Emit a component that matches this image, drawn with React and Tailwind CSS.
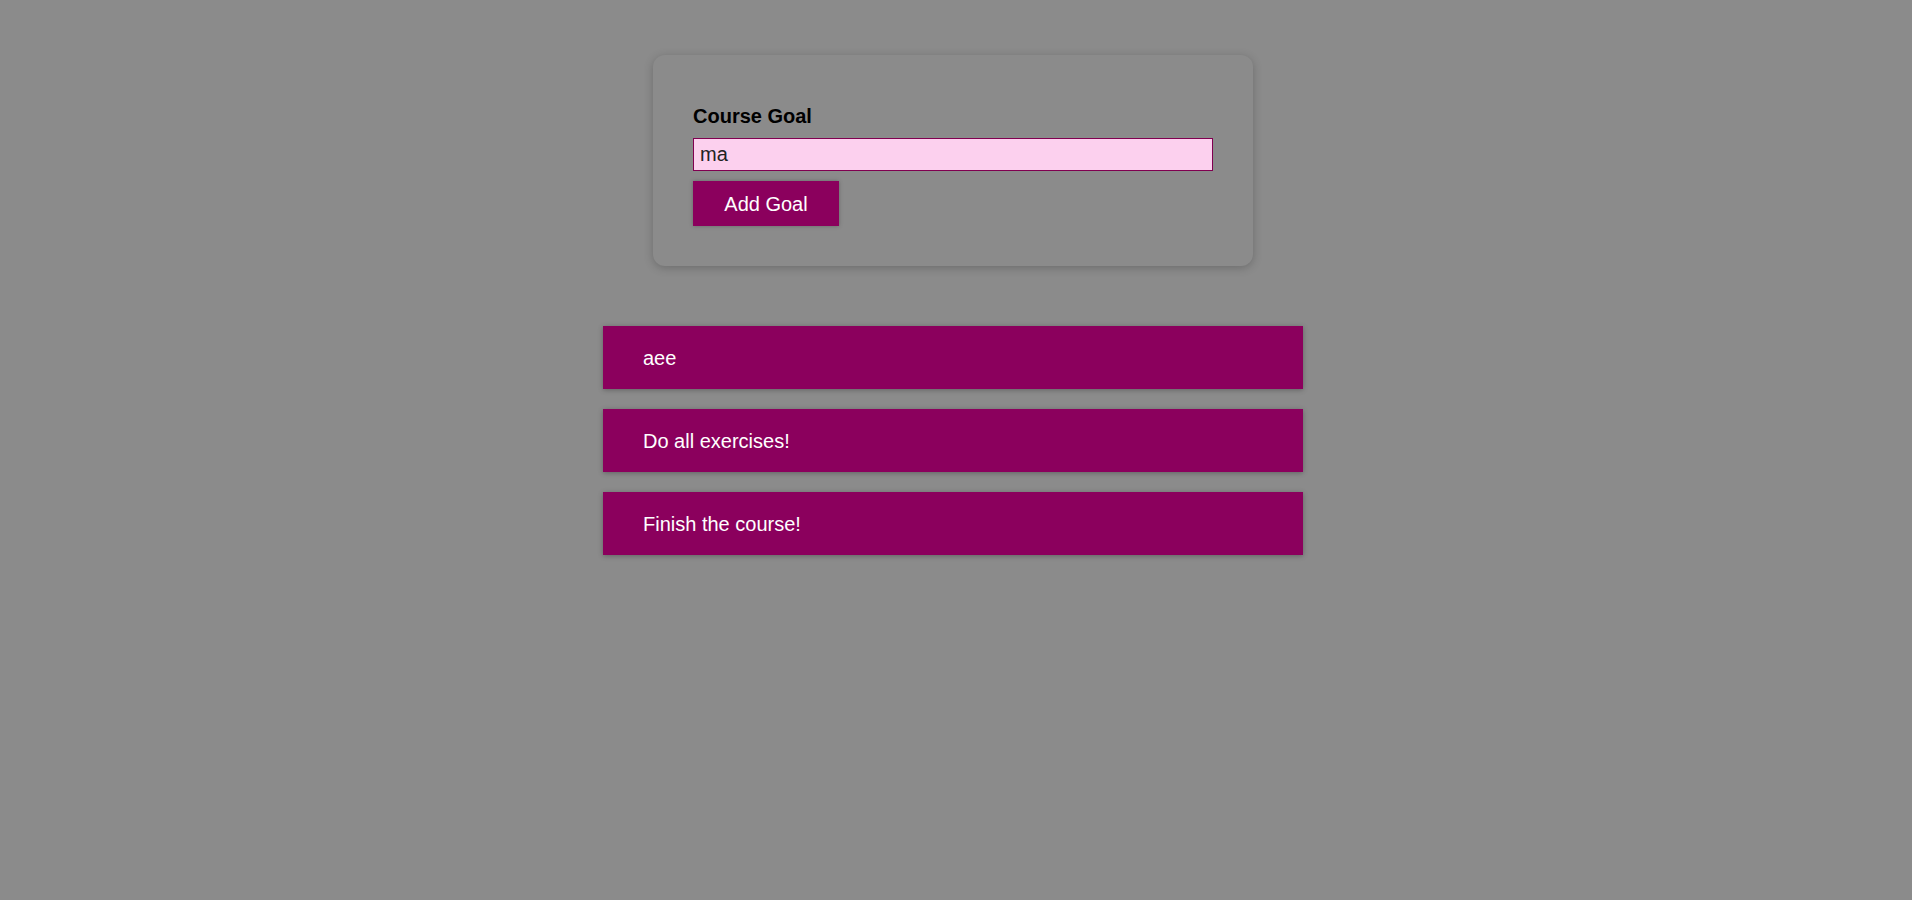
import { useState } from "react";

const initialGoals = [
    { id: "g3", text: "aee" },
    { id: "g1", text: "Do all exercises!" },
    { id: "g2", text: "Finish the course!" },
];

function CourseInput() {
    const [value, setValue] = useState("ma");

    return (
        <form
            onSubmit={(e) => e.preventDefault()}
            className="w-[600px] mx-auto rounded-[12px] bg-[#8b8b8b] px-[40px] pt-[50px] pb-[40px] shadow-[0_2px_10px_rgba(0,0,0,0.22)]"
        >
            <label className="block mb-[10px] text-[20px] leading-[23px] font-bold text-black">
                Course Goal
            </label>
            <input
                type="text"
                value={value}
                onChange={(e) => setValue(e.target.value)}
                className="block w-[520px] h-[33px] px-[6px] bg-[#fcd0ee] border border-[#800050] text-[20px] text-[#222] outline-none"
            />
            <button
                type="submit"
                className="mt-[10px] w-[146px] h-[45px] bg-[#8b005d] text-white text-[20px] shadow-[0_0_4px_rgba(0,0,0,0.26)]"
            >
                Add Goal
            </button>
        </form>
    );
}

function GoalItem({ text }) {
    return (
        <li className="mb-[20px] h-[63px] flex items-center pl-[40px] bg-[#8b005d] text-white text-[20px] shadow-[0_1px_5px_rgba(0,0,0,0.3)]">
            {text}
        </li>
    );
}

export default function App() {
    const [goals] = useState(initialGoals);

    return (
        <div
            className="min-h-[900px] bg-[#8b8b8b] pt-[55px] pr-[6px]"
            style={{ fontFamily: '"Liberation Sans", Arial, sans-serif' }}
        >
            <CourseInput />
            <ul className="w-[700px] mx-auto mt-[60px] list-none">
                {goals.map((g) => (
                    <GoalItem key={g.id} text={g.text} />
                ))}
            </ul>
        </div>
    );
}
